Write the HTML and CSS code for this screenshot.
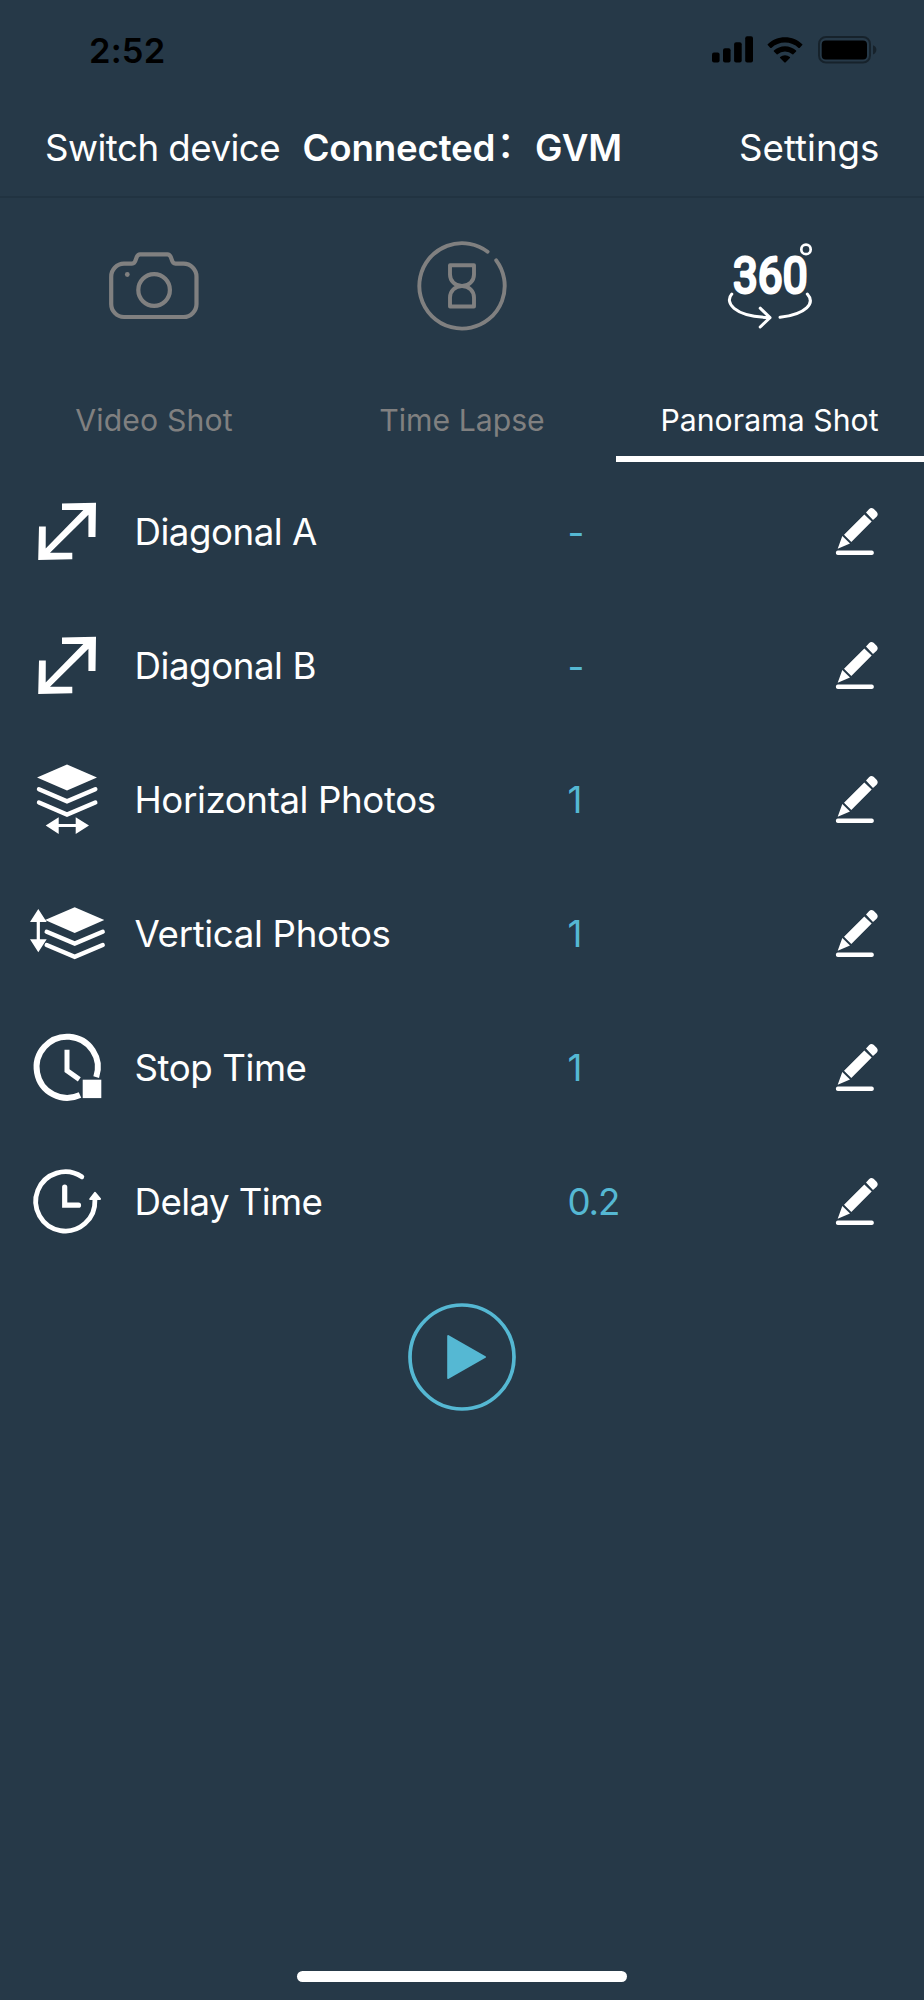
FILE: index.html
```html
<!DOCTYPE html>
<html lang="en">
<head>
<meta charset="utf-8">
<title>Panorama Shot</title>
<link rel="stylesheet" href="styles.css">
</head>
<body>
<svg class="defs" width="0" height="0" aria-hidden="true">
  <symbol id="pencil" viewBox="0 0 60 60">
    <path d="M11.7 46.2 16.3 33.5 24 40.8ZM18 32.2 38.3 11.8 45.7 18.8 25.3 39.5ZM40 9.8 43 6.6Q45.2 4.4 47.6 6.2L50.6 9.2Q52.8 11.8 50.6 14.2L47 17.4Z"/>
    <rect x="10" y="47.8" width="37.7" height="4.7" rx="1.8"/>
  </symbol>
  <symbol id="diagonal" viewBox="0 0 80 80">
    <path d="M35 10.9 69 10.2 68.5 44.3H61.4V22.2L23 60.2H45.3V66.7L11.2 67.5 12 33.8H18.8L18.7 55.8 56.3 17.5H35Z"/>
  </symbol>
</svg>
<div class="screen">
  <header class="status">
    <span class="clock">2:52</span>
    <div class="indicators">
      <svg width="32" height="28" viewBox="0 0 32 28"><rect x="0" y="16.6" width="7.6" height="10" rx="2"/><rect x="11" y="12.2" width="7.6" height="14.4" rx="2"/><rect x="22.1" y="6.2" width="7.6" height="20.4" rx="2"/><rect x="33.2" y="0.3" width="7.8" height="26.3" rx="2"/></svg>
      <svg class="wifi" width="36" height="28" viewBox="0 0 36 28"><path d="M18 .2C24.600.2 30.800 2.700 35.300 7.200Q35.700 7.700 35.300 8.100L32.600 10.900Q32.100 11.300 31.600 10.900C27.900 7.400 23.100 5.500 18 5.500S8.100 7.400 4.400 10.900Q3.900 11.300 3.400 10.900L.7 8.100Q.3 7.700.7 7.200C5.200 2.700 11.400.2 18 .2ZM18 9.200C22.200 9.200 26.100 10.800 29.100 13.600Q29.500 14.100 29.100 14.500L26.300 17.300Q25.900 17.700 25.400 17.300A11 11 0 0 0 10.600 17.300Q10.100 17.700 9.700 17.300L6.900 14.500Q6.500 14.100 6.900 13.600C9.900 10.800 13.800 9.200 18 9.200ZM18 18.200Q20.700 18.200 22.900 19.900 23.400 20.400 22.900 20.900L18.500 25.400Q18 25.800 17.500 25.400L13.100 20.900Q12.600 20.400 13.100 19.900 15.300 18.200 18 18.200Z"/></svg>
      <svg width="59" height="28" viewBox="0 0 59 28"><rect x="1" y="1" width="51" height="25.600" rx="7" fill="none" stroke="#000" stroke-opacity=".4" stroke-width="2"/><rect x="3.700" y="4.400" width="45.300" height="19" rx="4"/><path fill-opacity=".4" d="M55 9.200Q58.400 10.500 58.400 13.800T55 18.500Z"/></svg>
    </div>
  </header>
  <nav class="nav">
    <span class="switch">Switch device</span>
    <strong class="title"><span class="state">Connected</span><span class="colon">：</span><span class="name">GVM</span></strong>
    <span class="settings">Settings</span>
  </nav>
  <div class="tabs">
    <div class="tab">
      <svg width="100" height="100" viewBox="0.500 0 100 100" fill="none" stroke="currentColor" stroke-width="4.200"><path d="M20.500 27.700H28.500C34 27.700 31 18.300 36.500 18.300H64C69.500 18.300 66.500 27.700 72 27.700H80A13 13 0 0 1 93 40.700V68A13 13 0 0 1 80 81H20.500A13 13 0 0 1 7.700 68V40.700A13 13 0 0 1 20.500 27.700Z"/><circle cx="50.600" cy="54" r="15.800"/><circle cx="23.800" cy="38.500" r="2.400" fill="currentColor" stroke="none"/></svg>
      <span class="t-video">Video Shot</span>
    </div>
    <div class="tab">
      <svg width="100" height="100" viewBox="0 0 100 100" fill="none" stroke="currentColor" stroke-width="3.900" stroke-linecap="round" stroke-linejoin="round"><path d="M75.600 15.700A42.700 42.700 0 1 0 84.200 24.300"/><path d="M38 29.200H62V38.500C62 45 57 50 50 50S38 45 38 38.500ZM50 50C43 50 38 55 38 61.500V70.500H62V61.500C62 55 57 50 50 50Z"/></svg>
      <span class="t-lapse">Time Lapse</span>
    </div>
    <div class="tab active">
      <svg width="100" height="100" viewBox="0.500 0 100 100" fill="none" stroke="currentColor" stroke-width="3" stroke-linecap="round" stroke-linejoin="round"><text class="deg" x="13.500" y="57" textLength="74.500" lengthAdjust="spacingAndGlyphs">360</text><circle cx="86.500" cy="13.400" r="4.700" stroke-width="2.700"/><path d="M12.300 58C5 66 13.500 80.500 49 81.500M40.700 72.200 50.500 81.700 40.700 91M87.800 58C96 67 87 78 60.500 81.300"/></svg>
      <span class="t-pano">Panorama Shot</span>
    </div>
  </div>
  <main class="list">
    <div class="row"><svg class="icon"><use href="#diagonal"/></svg><span class="label l-a">Diagonal A</span><span class="value dash">-</span><svg class="edit"><use href="#pencil"/></svg></div>
    <div class="row"><svg class="icon"><use href="#diagonal"/></svg><span class="label l-b">Diagonal B</span><span class="value dash">-</span><svg class="edit"><use href="#pencil"/></svg></div>
    <div class="row">
      <svg class="icon" viewBox="0 0 80 80"><path d="M40 3.900 70 16.900 40 29.900 10 16.900ZM18.700 64.900 31.700 56.600V73.300ZM62 64.900 48.700 56.600V73.300Z"/><path class="line" stroke-width="4.400" d="M12 28.600 40 40.700 68.300 28.600M12 41.900 40 54 68.300 41.900"/><path class="line" stroke-width="3.200" d="M30 64.900H50"/></svg>
      <span class="label l-h">Horizontal Photos</span><span class="value">1</span><svg class="edit"><use href="#pencil"/></svg>
    </div>
    <div class="row">
      <svg class="icon" viewBox="0 0 80 80"><path d="M47.700 12.700 77.300 25.400 47.700 38.400 18 25.400ZM11.300 14.400 19.700 27.400H3ZM11.300 57.700 19.700 44.700H3Z"/><path class="line" stroke-width="4.400" d="M19.700 37.200 47.700 49 75.700 37.200M19.700 50.500 47.700 62.300 75.700 50.500"/><path class="line" stroke-width="3.200" d="M11.300 26V46"/></svg>
      <span class="label l-v">Vertical Photos</span><span class="value">1</span><svg class="edit"><use href="#pencil"/></svg>
    </div>
    <div class="row">
      <svg class="icon" viewBox="0 0 80 80"><path class="line butt" stroke-width="6" d="M69.200 48.500A30.600 30.600 0 1 0 53 66.500"/><path class="line butt" stroke-width="5" d="M40 21.200V42L52.300 50.800"/><rect x="55.700" y="51.100" width="18.600" height="18.400"/></svg>
      <span class="label l-s">Stop Time</span><span class="value">1</span><svg class="edit"><use href="#pencil"/></svg>
    </div>
    <div class="row">
      <svg class="icon" viewBox="0 0 80 80"><path class="line" stroke-width="4.800" d="M54.800 14.200A29.600 29.600 0 1 0 67.900 37.500"/><path class="line" stroke-width="5.200" d="M37.700 24.500V42.600H51.500"/><path class="line solid" stroke-width="2" d="M68 30.200 63.200 36.400H73Z"/></svg>
      <span class="label l-d">Delay Time</span><span class="value">0.2</span><svg class="edit"><use href="#pencil"/></svg>
    </div>
  </main>
  <div class="player">
    <svg width="108" height="108" viewBox="0 0 108 108"><circle cx="54" cy="54" r="52" fill="none" stroke="#55b8d3" stroke-width="3.700"/><path d="M40.200 33 77 54 40.200 75Z" fill="#55b8d3" stroke="#55b8d3" stroke-width="2" stroke-linejoin="round"/></svg>
  </div>
  <div class="home"></div>
</div>
</body>
</html>
```
FILE: styles.css
```css
body { margin: 0; background: #263948; }
.defs { position: absolute; }
.screen {
  width: 924px; height: 2000px; box-sizing: border-box;
  display: flex; flex-direction: column;
  background: #263948; color: #fff;
  font-family: Inter, "Noto Sans", sans-serif;
  font-size: 36.7px; white-space: nowrap; overflow: hidden;
}
.screen svg { display: block; overflow: visible; flex: none; }

.status {
  height: 100px; box-sizing: border-box; flex: none;
  display: flex; justify-content: space-between; align-items: flex-start;
  padding: 36px 47px 0 89px; color: #000;
}
.clock { font-size: 34.5px; font-weight: 600; line-height: 30px; letter-spacing: 0.15px; }
.indicators { display: flex; padding-top: 0.4px; }
.wifi { margin: 1px 15px 0 23px; }

.nav {
  height: 98px; box-sizing: border-box; flex: none;
  display: grid; grid-template-columns: 257.5px 436.5px 1fr; align-items: start;
  padding: 28px 0 0 45px; line-height: 40px;
  border-bottom: 2px solid #213341;
}
.switch { letter-spacing: -0.53px; }
.title { display: flex; font-weight: 600; }
.state { width: 193.5px; letter-spacing: -0.2px; }
.colon {
  width: 39px; padding-left: 0.5px; margin-top: -6px; box-sizing: border-box;
  font-family: "Noto Sans CJK SC", sans-serif; font-weight: 500;
}

.tabs { height: 264px; flex: none; display: grid; grid-template-columns: repeat(3, 1fr); }
.tab {
  display: flex; flex-direction: column; align-items: center;
  box-sizing: border-box; padding-top: 38px;
  border-bottom: 6px solid transparent;
  color: #808080; font-size: 30.2px; line-height: 40px;
}
.tab span { margin-top: 64px; }
.t-video { letter-spacing: 0.15px; }
.t-pano { letter-spacing: 0.05px; margin-right: 1px; }
.tab.active { color: #fff; border-bottom-color: #fff; }
.deg { font-family: Roboto, sans-serif; font-size: 50px; font-weight: 400; fill: #fff; stroke-width: 3px; }

.list { padding-top: 3.5px; flex: none; }
.row {
  height: 133.93px; display: grid;
  grid-template-columns: 107.5px 433px 258.5px 60px;
  padding-left: 27px; align-items: center; line-height: 40px;
}
.icon { width: 80px; height: 80px; fill: #fff; padding-top: 0.6px; }
.edit { width: 60px; height: 60px; fill: #fff; padding-top: 0.6px; }
.line { fill: none; stroke: #fff; stroke-linecap: round; }
.line.butt { stroke-linecap: butt; }
.line.solid { fill: #fff; stroke-linejoin: round; }
.l-a { letter-spacing: -0.5px; }
.l-b { letter-spacing: -0.45px; }
.l-h { letter-spacing: -0.4px; }
.l-v { letter-spacing: -0.35px; }
.l-s { letter-spacing: -0.45px; }
.l-d { letter-spacing: -0.6px; }
.value { color: #55b8d3; letter-spacing: -1.2px; }
.dash { padding-top: 2px; }

.player { display: flex; justify-content: center; margin-top: 34px; }
.home { width: 330px; height: 11px; border-radius: 6px; background: #fff; margin: auto auto 18px; }
```
